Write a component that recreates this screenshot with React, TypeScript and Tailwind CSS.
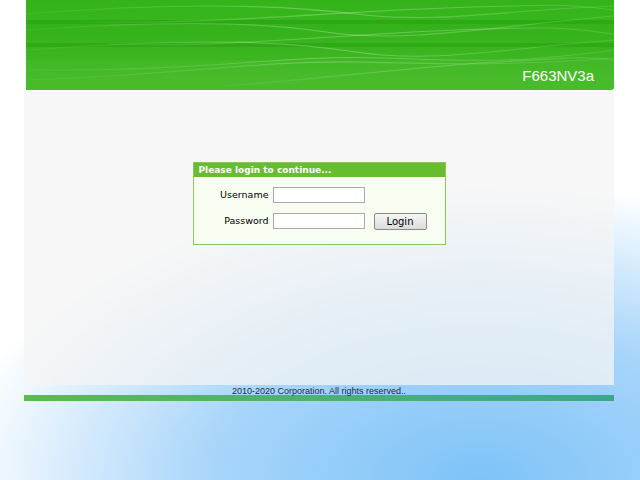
import React from 'react';

function Banner() {
  return (
    <div className="relative ml-[2px] h-[90px] w-[588px] overflow-hidden rounded-br-[3px]">
      <svg className="absolute inset-0" width="588" height="90" viewBox="0 0 588 90" preserveAspectRatio="none">
        <defs>
          <linearGradient id="bg" x1="0" y1="0" x2="0" y2="1">
            <stop offset="0" stopColor="#31b016" />
            <stop offset="0.5" stopColor="#38b41e" />
            <stop offset="1" stopColor="#47b92a" />
          </linearGradient>
          <linearGradient id="shine" x1="0" y1="0" x2="1" y2="0">
            <stop offset="0" stopColor="#ffffff" stopOpacity="0.05" />
            <stop offset="0.5" stopColor="#ffffff" stopOpacity="0.28" />
            <stop offset="1" stopColor="#ffffff" stopOpacity="0.12" />
          </linearGradient>
        </defs>
        <rect width="588" height="90" fill="url(#bg)" />
        {/* horizontal bands */}
        <rect y="20" width="588" height="4" fill="#249e0a" opacity="0.45" />
        <rect y="43" width="588" height="4" fill="#249e0a" opacity="0.45" />
        <rect y="0" width="588" height="20" fill="#3cbc22" opacity="0.35" />
        {/* waves */}
        <g fill="none" stroke="url(#shine)" strokeWidth="1.1">
          <path d="M0 14 C150 2 250 4 330 14 S480 10 588 6" />
          <path d="M0 30 C120 22 220 20 300 32 S470 26 588 16" />
          <path d="M60 22 C200 24 300 12 420 8 S540 4 588 10" />
          <path d="M0 50 C160 38 250 40 330 52 S480 48 588 40" />
          <path d="M80 44 C200 48 320 34 430 30 S540 28 588 34" />
          <path d="M0 80 C140 76 240 60 330 62 S480 66 588 58" />
          <path d="M0 70 C180 72 260 54 360 58 S500 62 588 50" />
          <path d="M200 86 C300 78 400 66 470 62 S560 56 588 60" />
        </g>
        <rect y="60" width="588" height="30" fill="#55c232" opacity="0.25" />
      </svg>
      <div className="relative flex h-full items-end justify-end pb-[6px] pr-[20px]">
        <span className="font-['Liberation_Sans',Arial,sans-serif] text-[15px] leading-[17px] text-white">F663NV3a</span>
      </div>
    </div>
  );
}

function LoginBox() {
  return (
    <div className="w-[253px] border border-[#8cc55e] bg-[#f8fdf2] font-['DejaVu_Sans',Verdana,sans-serif]">
      <div className="h-[14px] bg-[#66bd2e] px-[5px] text-[9px] font-bold leading-[14px] text-white">
        Please login to continue...
      </div>
      <div className="grid grid-cols-[75px_92px_auto] items-start gap-x-[4px] gap-y-[10px] pb-[14px] pt-[10px] text-[9.5px] text-black">
        <span className="text-right leading-[16px]">Username</span>
        <input className="h-[16px] w-[92px] border border-[#a9a9a9] bg-white" />
        <span />
        <span className="text-right leading-[16px]">Password</span>
        <input type="password" className="h-[16px] w-[92px] border border-[#a9a9a9] bg-white" />
        <button className="ml-[5px] h-[17px] w-[53px] rounded-[2px] border border-[#8a8a8a] bg-gradient-to-b from-[#f6f6f6] to-[#dcdcdc] text-[10px] leading-[15px] text-black">
          Login
        </button>
      </div>
    </div>
  );
}

export default function App() {
  return (
    <div className="min-h-screen w-full bg-white bg-[radial-gradient(ellipse_600px_340px_at_75%_100%,#7ec3f8_0%,#a8d5fa_45%,#e4f2fd_75%,#ffffff_88%)]">
      <div className="ml-[24px] w-[590px]">
        <Banner />
        <div className="mt-[2px] flex h-[293px] justify-center bg-[#f4f4f4]/75 pt-[70px]">
          <div className="h-fit">
            <LoginBox />
          </div>
        </div>
        <div className="h-[10px] text-center font-['Liberation_Sans',Arial,sans-serif] text-[9px] leading-[12px] text-[#1a2b3c]">
          2010-2020 Corporation. All rights reserved..
        </div>
        <div className="h-[6px] bg-gradient-to-r from-[#5bbb4a] to-[#3aa78d]" />
      </div>
    </div>
  );
}
